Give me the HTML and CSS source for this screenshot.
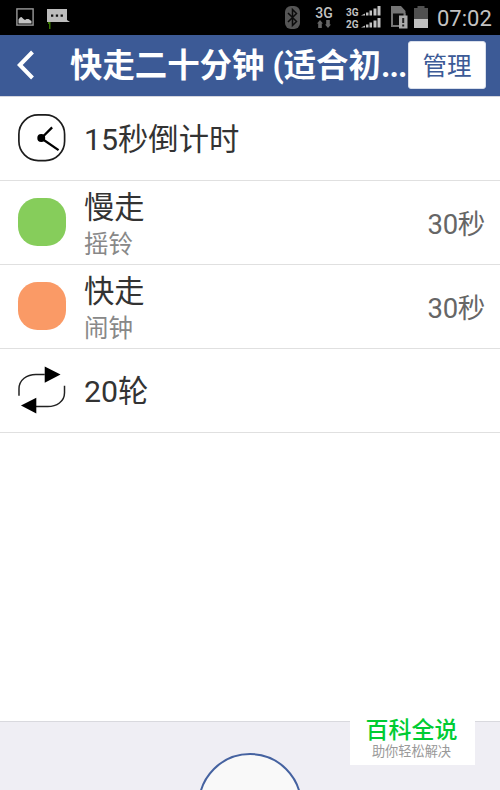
FILE: index.html
```html
<!DOCTYPE html>
<html lang="zh-CN">
<head>
<meta charset="utf-8">
<title>快走二十分钟</title>
<link rel="stylesheet" href="styles.css">
</head>
<body>
<div class="screen">
  <div class="status">
    <svg class="picture" width="18" height="18" viewBox="0 0 18 18"><rect x=".9" y=".9" width="16.2" height="16.2" fill="none" stroke="#999" stroke-width="1.4"/><path d="M2.500 15.500V11.500l1.500-2 1.500-.5 2 2 1.500 1 1.500-1 2 0 3 2v2.500z" fill="#c4c4c4"/></svg>
    <svg class="message" width="23" height="21" viewBox="0 0 23 21"><path d="M0 0h20v11l3 2H0z" fill="#bdbdbd"/><path d="M4 5.500h2.300v2.300H4zM8.800 5.500h2.300v2.300H8.800zM13.600 5.500h2.300v2.300h-2.300z" fill="#111"/><path d="M1 13h2.500v7H2v-5H1z" fill="#397800"/></svg>
    <svg class="bluetooth" width="15" height="23" viewBox="0 0 15 23"><rect width="15" height="23" rx="6" fill="#555"/><path d="M3 7l8.500 8.500-4 4V3.500l4 4L3 16" fill="none" stroke="#0b0b0b" stroke-width="1.500"/></svg>
    <div class="data">
      <span>3G</span>
      <svg width="14" height="8" viewBox="0 0 14 8"><path d="M3 0l3 3.500H4.800V8H1.200V3.500H0zM11 8l3-3.500h-1.200V0H9.200v4.500H8z" fill="#666"/></svg>
    </div>
    <div class="networks">
      <div class="network"><span>3G</span><svg width="20" height="11" viewBox="0 0 20 11"><path d="M0 10.500L4 8.500v2zM5 10.500V7.500h2.500v3zM8.500 10.500V5.500h2.500v5zM12.500 10.500V3.500h3v7zM16.500 10.500V1h3v9.500z" fill="#c2c2c2"/></svg></div>
      <div class="network"><span>2G</span><svg width="20" height="11" viewBox="0 0 20 11"><path d="M0 10.500L4 8.500v2zM5 10.500V7.500h2.500v3zM8.500 10.500V5.500h2.500v5zM12.500 10.500V3.500h3v7zM16.500 10.500V1h3v9.500z" fill="#c2c2c2"/></svg></div>
    </div>
    <svg class="sim" width="17" height="24" viewBox="0 0 17 24"><path d="M0 1h10l4.500 5v5H0z" fill="#757575"/><path d="M1 8v13h8" fill="none" stroke="#757575" stroke-width="2"/><path d="M2 8.500h11V11H8v9H2z" fill="#0a0a0a"/><path d="M13.500 8v4" stroke="#757575" stroke-width="2"/><rect x="8" y="10.500" width="8.500" height="13" fill="#aaa"/><path d="M11.200 13h2v5h-2zM11.200 19.500h2v2h-2z" fill="#222"/></svg>
    <svg class="battery" width="14" height="22" viewBox="0 0 14 22"><path d="M3.500 0h7v2H14v11H0V2h3.500z" fill="#505050"/><path d="M0 13h14v9H0z" fill="#c0c0c0"/></svg>
    <span class="time">07:02</span>
  </div>
  <header class="header">
    <svg class="back" width="18" height="30" viewBox="0 0 18 30"><path d="M15.500 2L2.800 15l12.700 13" fill="none" stroke="#fff" stroke-width="4"/></svg>
    <h1 class="title">快走二十分钟 (适合初<span class="dots">...</span></h1>
    <button class="manage">管理</button>
  </header>
  <main class="list">
    <div class="row">
      <svg class="icon" viewBox="0 0 48 48"><rect x=".9" y=".9" width="46.200" height="46.200" rx="19.500" fill="#fff" stroke="#1c1c1c" stroke-width="1.700"/><path d="M34.500 13.500L23.500 24.500 41 36.500" fill="none" stroke="#000" stroke-width="2.300"/><circle cx="23.500" cy="24.300" r="4" fill="#000"/></svg>
      <div class="label">15秒倒计时</div>
    </div>
    <div class="row">
      <div class="icon swatch slow"></div>
      <div class="label">慢走<div class="sound">摇铃</div></div>
      <div class="duration">30秒</div>
    </div>
    <div class="row">
      <div class="icon swatch fast"></div>
      <div class="label">快走<div class="sound">闹钟</div></div>
      <div class="duration">30秒</div>
    </div>
    <div class="row">
      <svg class="icon" viewBox="0 0 48 48"><path d="M1 30v-7C1 14 9 8.500 18 8.500h9M47 20v7c0 9-8 14-17 14H17" fill="none" stroke="#222" stroke-width="1.500"/><path d="M27 .5L43 8.500 27 17zM18.500 32v16L3 40z" fill="#000"/></svg>
      <div class="label">20轮</div>
    </div>
  </main>
  <footer class="footer">
    <div class="start"></div>
  </footer>
  <div class="badge">
    <div class="badge-name">百科全说</div>
    <div class="badge-note">助你轻松解决</div>
  </div>
</div>
</body>
</html>
```
FILE: styles.css
```css
* { box-sizing: border-box; }
body { margin: 0; font-family: Roboto, "Noto Sans CJK SC", sans-serif; }
svg { display: block; flex: none; }
.screen { position: relative; width: 500px; height: 790px; overflow: hidden; display: flex; flex-direction: column; background: #fff; }

.status { height: 35px; flex: none; display: flex; align-items: flex-start; background: #000; color: #c2c2c2; }
.picture { margin: 8px 0 0 16px; }
.message { margin: 9px 0 0 13px; }
.bluetooth { margin: 6px 0 0 215px; }
.data { width: 18px; margin: 6px 0 0 15px; display: flex; flex-direction: column; align-items: center; font-size: 14px; line-height: 14px; font-weight: 500; }
.networks { margin: 5px 0 0 13px; }
.network { height: 12px; display: flex; justify-content: space-between; width: 35px; font-size: 10px; line-height: 15px; font-weight: 700; }
.sim { margin: 5px 0 0 10px; }
.battery { margin: 6px 0 0 6px; }
.time { margin: 6px 0 0 9px; font-size: 22px; line-height: 26px; }

.header { height: 62px; flex: none; display: flex; align-items: flex-start; background: #3c5a96; border-bottom: 1px solid #d5d6de; color: #fff; }
.back { margin: 15px 0 0 17px; }
.title { width: 338px; margin: 6px 0 0 35px; font-size: 32.400px; line-height: 50px; font-weight: 700; white-space: nowrap; }
.dots { letter-spacing: -.9px; }
.manage { width: 78px; height: 48px; margin: 6px 0 0; padding: 3px 0 0; border: 1px solid #d9dfeb; border-radius: 3px; background: #fff; color: #3c5a96; font: 24.500px/43px Roboto, "Noto Sans CJK SC", sans-serif; }

.list { flex: 1; }
.row { height: 84px; display: flex; align-items: center; padding: 0 15px 0 18px; border-bottom: 1px solid #e0e0e0; }
.icon { width: 47.500px; height: 47.500px; margin-bottom: 1px; flex: none; }
.swatch { border-radius: 19.500px; }
.slow { background: #86cd5b; }
.fast { background: #fa9a66; }
.label { flex: 1; margin-left: 18.500px; padding-top: 3px; font-size: 30.300px; line-height: 38px; color: #333; }
.sound { margin-bottom: -3px; font-size: 24.500px; line-height: 36px; color: #888; }
.duration { padding-top: 4px; font-size: 27.500px; line-height: 40px; letter-spacing: -.3px; color: #666; }

.footer { height: 69px; flex: none; background: #efeef4; border-top: 1px solid #d9d9de; overflow: hidden; }
.start { width: 104px; height: 104px; margin: 31px auto 0; border: 2px solid #4562a0; border-radius: 50%; background: #f9f9f9; }
.badge { position: absolute; left: 350px; top: 709px; width: 125px; height: 56px; padding-top: 6px; background: #fff; text-align: center; }
.badge-name { margin-left: -2px; font-size: 23px; line-height: 32px; font-weight: 500; color: #00cc33; }
.badge-note { margin-left: -2px; font-size: 13.200px; line-height: 10px; color: #999; }
```
